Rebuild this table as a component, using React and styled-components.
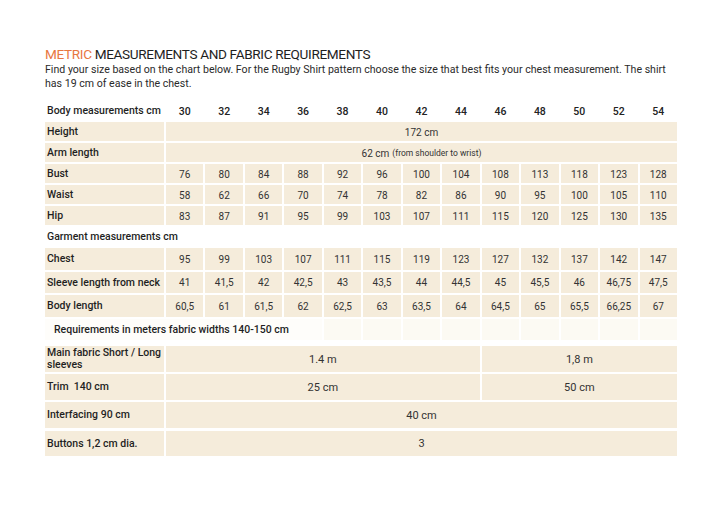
import React from 'react'
import styled, { createGlobalStyle } from 'styled-components'

const sizes = [30, 32, 34, 36, 38, 40, 42, 44, 46, 48, 50, 52, 54]

const body = [
  { label: 'Bust', values: [76, 80, 84, 88, 92, 96, 100, 104, 108, 113, 118, 123, 128] },
  { label: 'Waist', values: [58, 62, 66, 70, 74, 78, 82, 86, 90, 95, 100, 105, 110] },
  { label: 'Hip', values: [83, 87, 91, 95, 99, 103, 107, 111, 115, 120, 125, 130, 135] },
]

const garment = [
  { label: 'Chest', values: [95, 99, 103, 107, 111, 115, 119, 123, 127, 132, 137, 142, 147] },
  { label: 'Sleeve length from neck', values: ['41', '41,5', '42', '42,5', '43', '43,5', '44', '44,5', '45', '45,5', '46', '46,75', '47,5'] },
  { label: 'Body length', values: ['60,5', '61', '61,5', '62', '62,5', '63', '63,5', '64', '64,5', '65', '65,5', '66,25', '67'] },
]

const GlobalStyle = createGlobalStyle`
  body {
    margin: 0;
    background: #fff;
    font-family: Roboto, "Liberation Sans", sans-serif;
    color: #222;
  }
`

const Page = styled.div`
  padding: 46px 0 0 45px;
  width: 632px;
`

const Title = styled.h1`
  margin: 0;
  font-size: 13.6px;
  line-height: 17px;
  font-weight: 400;
  color: #1e1e1e;
  letter-spacing: -0.35px;
  span {
    color: #e8773f;
  }
`

const Intro = styled.p`
  margin: 0 0 10px;
  font-size: 10.6px;
  line-height: 14px;
  color: #2a2a2a;
  width: 640px;
`

const Grid = styled.div`
  display: grid;
  grid-template-columns: 119px repeat(13, 1fr);
  column-gap: 2px;
  row-gap: ${p => p.$gap}px;
  grid-auto-rows: ${p => p.$row}px;
  grid-template-rows: ${p => p.$first ? `${p.$first}px` : 'none'};
  margin-bottom: ${p => p.$after || 0}px;
`

const Label = styled.div`
  grid-column: span ${p => p.$span || 1};
  display: flex;
  align-items: center;
  padding-left: ${p => p.$indent || 2}px;
  background: ${p => p.$bg || 'transparent'};
  font-size: 10.5px;
  line-height: 11.5px;
  font-weight: 500;
  color: #1f1f1f;
`

const Head = styled.div`
  display: flex;
  align-items: center;
  justify-content: center;
  padding-top: 2px;
  font-size: 10.5px;
  font-weight: 500;
  color: #222;
`

const Cell = styled.div`
  grid-column: span ${p => p.$span || 1};
  display: flex;
  align-items: center;
  justify-content: center;
  background: ${p => p.$bg || '#f5ecdb'};
  font-size: ${p => p.$size || 10}px;
  color: #333;
  padding-top: 1px;
`

const Small = styled.span`
  font-size: 8.5px;
  margin-left: 3px;
`

const cream = '#f5ecdb'

export default function App() {
  return (
    <>
      <GlobalStyle />
      <Page>
        <Title>
          <span>METRIC</span> MEASUREMENTS AND FABRIC REQUIREMENTS
        </Title>
        <Intro>
          Find your size based on the chart below. For the Rugby Shirt pattern choose the size that best fits your chest measurement. The shirt has 19 cm of ease in the chest.
        </Intro>

        <Grid $row={19} $gap={2} $after={2}>
          <Label>Body measurements cm</Label>
          {sizes.map(s => <Head key={s}>{s}</Head>)}

          <Label $bg={cream}>Height</Label>
          <Cell $span={13}>172 cm</Cell>

          <Label $bg={cream}>Arm length</Label>
          <Cell $span={13}>62 cm <Small>(from shoulder to wrist)</Small></Cell>

          {body.map(r => (
            <React.Fragment key={r.label}>
              <Label $bg={cream}>{r.label}</Label>
              {r.values.map((v, i) => <Cell key={i}>{v}</Cell>)}
            </React.Fragment>
          ))}
        </Grid>

        <Grid $first={19} $row={21.5} $gap={2} $after={6}>
          <Label $span={14}>Garment measurements cm</Label>
          {garment.map(r => (
            <React.Fragment key={r.label}>
              <Label $bg={cream}>{r.label}</Label>
              {r.values.map((v, i) => <Cell key={i}>{v}</Cell>)}
            </React.Fragment>
          ))}
          <Label $span={5} $indent={9} $bg="#fefdfa">Requirements in meters fabric widths 140-150 cm</Label>
          {sizes.slice(4).map(s => <Cell key={s} $bg="#fcfaf3" />)}
        </Grid>

        <Grid $row={25.5} $gap={2.7}>
          <Label $bg={cream}>Main fabric Short / Long sleeves</Label>
          <Cell $span={8} $size={11}>1.4 m</Cell>
          <Cell $span={5} $size={11}>1,8 m</Cell>

          <Label $bg={cream}>Trim&nbsp; 140 cm</Label>
          <Cell $span={8} $size={11}>25 cm</Cell>
          <Cell $span={5} $size={11}>50 cm</Cell>

          <Label $bg={cream}>Interfacing 90 cm</Label>
          <Cell $span={13} $size={11}>40 cm</Cell>

          <Label $bg={cream}>Buttons 1,2 cm dia.</Label>
          <Cell $span={13} $size={11}>3</Cell>
        </Grid>
      </Page>
    </>
  )
}
